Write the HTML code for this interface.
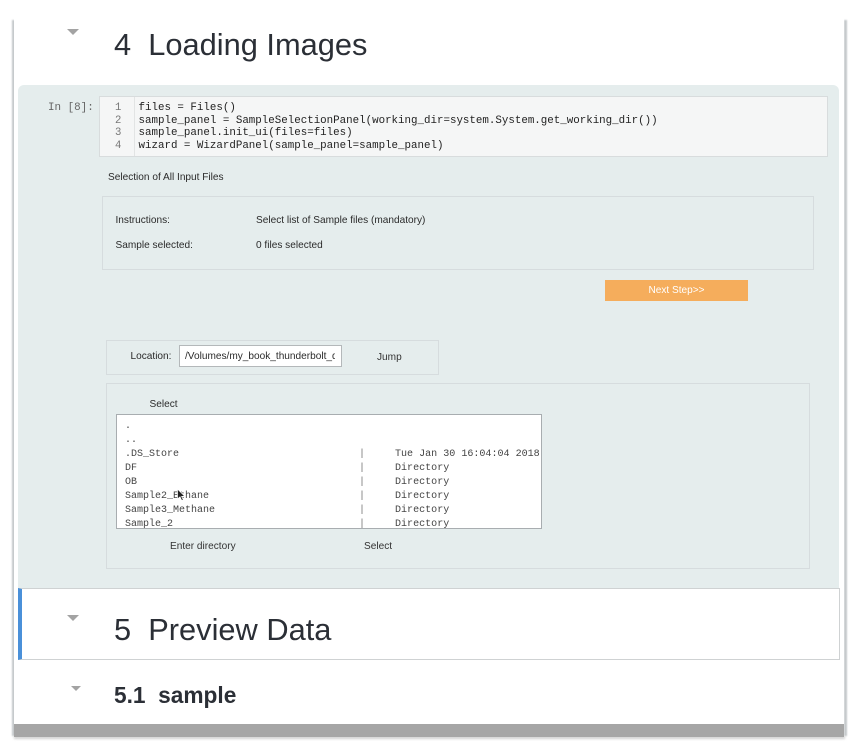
<!DOCTYPE html>
<html>
<head>
<meta charset="utf-8">
<style>
html,body{margin:0;padding:0;background:#fff;width:857px;height:745px;overflow:hidden}
body{position:relative;font-family:"Liberation Sans",sans-serif;color:#222}
div,span,svg{position:absolute}
.t{white-space:pre;line-height:14px;font-size:10.1px;color:#2a2a2a}
.m{font-family:"Liberation Mono",monospace;white-space:pre}
.box{box-sizing:border-box;border:1px solid #d6dcde;background:#e5eded}
.tri{width:0;height:0;border-left:6.5px solid transparent;border-right:6.5px solid transparent;border-top:6px solid #a3a3a3}
h1{position:absolute;margin:0;font-weight:400;white-space:pre;color:#2b2f36;font-size:30.8px;line-height:36px}
</style>
</head>
<body>
<!-- page shadow edges -->
<div style="left:12px;top:20px;width:3px;height:716px;background:#c4c8ca;filter:blur(.8px)"></div>
<div style="left:844px;top:20px;width:3px;height:716px;background:#c4c8ca;filter:blur(.8px)"></div>
<div style="left:14px;top:736px;width:831px;height:3px;background:#d0d0d0;filter:blur(1px)"></div>
<div style="left:14px;top:0;width:830px;height:724px;background:#fff"></div>
<div style="left:14px;top:724px;width:830px;height:13px;background:#a6a6a6"></div>

<div class="tri" style="left:67px;top:29px"></div>
<h1 style="left:114px;top:27px">4  Loading Images</h1>

<!-- cell -->
<div style="left:18px;top:85px;width:821px;height:503px;background:#e5eded;border-radius:6px 6px 0 0"></div>

<div class="m" style="left:48px;top:101px;font-size:10.9px;line-height:14px;color:#666">In [8]:</div>
<div style="left:99px;top:96px;width:729px;height:61px;box-sizing:border-box;background:#f5f6f6;border:1px solid #d8dcdd"></div>
<div style="left:134px;top:97px;width:1px;height:59px;background:#e2e4e4"></div>
<div class="m" style="left:115px;top:102px;font-size:10.6px;line-height:12.7px;color:#777">1
2
3
4</div>
<div class="m" style="left:138.5px;top:102px;font-size:10.82px;line-height:12.7px;color:#222">files = Files()
sample_panel = SampleSelectionPanel(working_dir=system.System.get_working_dir())
sample_panel.init_ui(files=files)
wizard = WizardPanel(sample_panel=sample_panel)</div>

<div class="t" style="left:108px;top:171px">Selection of All Input Files</div>

<div class="box" style="left:102px;top:196px;width:712px;height:74px"></div>
<div class="t" style="left:115.5px;top:214px">Instructions:</div>
<div class="t" style="left:256px;top:214px">Select list of Sample files (mandatory)</div>
<div class="t" style="left:115.5px;top:239px">Sample selected:</div>
<div class="t" style="left:256px;top:239px">0 files selected</div>

<div style="left:605px;top:280px;width:143px;height:21px;background:#f5ad5c"></div>
<div class="t" style="left:605px;top:284px;width:143px;text-align:center;color:#fff">Next Step&gt;&gt;</div>

<div class="box" style="left:106px;top:340px;width:333px;height:35px"></div>
<div class="t" style="left:130.5px;top:350px">Location:</div>
<div style="left:179px;top:345px;width:163px;height:22px;box-sizing:border-box;background:#fff;border:1px solid #b4b8ba"></div>
<div class="t" style="left:185px;top:350px;width:150px;overflow:hidden">/Volumes/my_book_thunderbolt_drive</div>
<div class="t" style="left:377px;top:351px;color:#333">Jump</div>

<div class="box" style="left:106px;top:383px;width:704px;height:186px"></div>
<div class="t" style="left:149.5px;top:398px">Select</div>

<div style="left:116px;top:414px;width:426px;height:115px;box-sizing:border-box;background:#fff;border:1px solid #a8adb0;overflow:hidden">
<div class="m" style="left:8px;top:5px;font-size:10px;line-height:14px;color:#444">.
..
.DS_Store
DF
OB
Sample2_Ethane
Sample3_Methane
Sample_2</div>
<div class="m" style="left:242px;top:5px;font-size:10px;line-height:14px;color:#777">

|
|
|
|
|
|</div>
<div class="m" style="left:278px;top:5px;font-size:10.05px;line-height:14px;color:#444">

Tue Jan 30 16:04:04 2018
Directory
Directory
Directory
Directory
Directory</div>
</div>
<svg style="left:176px;top:488px" width="10" height="14" viewBox="0 0 10 14"><path d="M1.5 1 L1.5 11 L4 8.8 L5.8 12.6 L7.3 11.9 L5.6 8.4 L8.7 8.2 Z" fill="#222" stroke="#fff" stroke-width=".7"/></svg>

<div class="t" style="left:170px;top:540px;color:#333">Enter directory</div>
<div class="t" style="left:364px;top:540px;color:#333">Select</div>

<!-- section 5 -->
<div style="left:18px;top:588px;width:822px;height:72px;box-sizing:border-box;background:#fff;border:1px solid #cfd2d3;border-left:4px solid #4a90d9"></div>
<div class="tri" style="left:67px;top:615px"></div>
<h1 style="left:114px;top:612px">5  Preview Data</h1>

<div class="tri" style="left:71px;top:686px;border-left-width:5.5px;border-right-width:5.5px;border-top-width:5px"></div>
<div style="left:114px;top:682px;font-size:22.7px;line-height:26px;font-weight:700;color:#2b2f36;white-space:pre">5.1  sample</div>
</body>
</html>
